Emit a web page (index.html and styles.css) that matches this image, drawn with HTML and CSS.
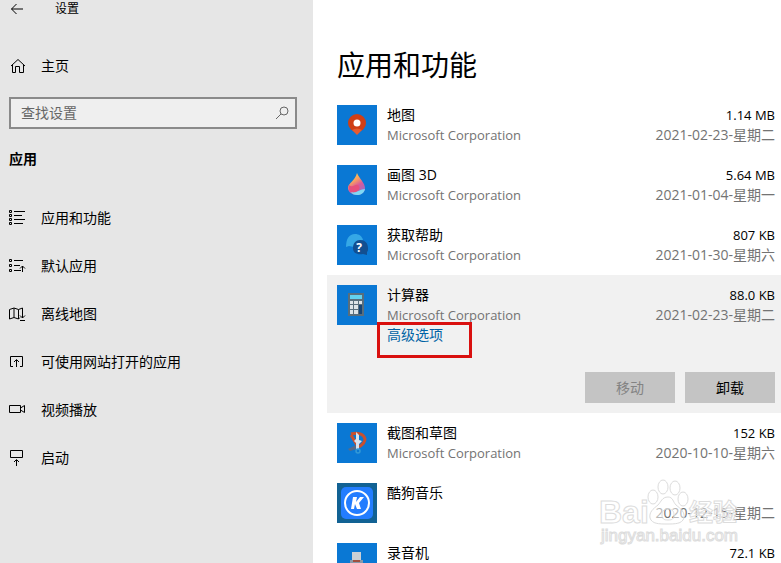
FILE: index.html
```html
<!DOCTYPE html>
<html lang="zh-CN">
<head>
<meta charset="utf-8">
<title>设置</title>
<link rel="stylesheet" href="styles.css">
</head>
<body>
<div class="shell">
  <aside class="sidebar">
    <header class="titlebar">
      <button class="back" type="button" aria-label="返回">
        <svg width="14" height="12" viewBox="0 0 14 12"><path d="M13 6H1.500M6.500 1l-5 5 5 5"/></svg>
      </button>
      <span>设置</span>
    </header>
    <a class="nav-link home" href="#">
      <svg width="18" height="16" viewBox="0 0 18 16"><path d="M2 8l7-6.500L16 8M3.500 6.500V14.500h3V8.500h4v6h4V6.500"/></svg>
      <span>主页</span>
    </a>
    <form class="search">
      <input type="search" placeholder="查找设置" aria-label="查找设置">
      <button type="button" aria-label="搜索">
        <svg width="14" height="14" viewBox="0 0 14 14"><circle cx="9" cy="5" r="4"/><path d="M6 8l-5 5"/></svg>
      </button>
    </form>
    <h2>应用</h2>
    <nav>
      <a class="nav-link" href="#">
        <svg width="18" height="18" viewBox="0 0 18 18"><path d="M.5 1.500h2v2h-2zM.5 5.500h2v2h-2zM.5 9.500h2v2h-2zM.5 13.500h2v2h-2zM5 2.500h11M5 6.500h8M5 10.500h11M5 14.500h9"/></svg>
        <span>应用和功能</span>
      </a>
      <a class="nav-link" href="#">
        <svg width="18" height="18" viewBox="0 0 18 18"><path d="M.5 2.500h2v2h-2zM.5 7.500h2v2h-2zM.5 12.500h2v2h-2zM5 3.500h9M5 8.500h6M5 13.500h7M13.500 15V9M11 11.500L13.500 9l2.500 2.500"/></svg>
        <span>默认应用</span>
      </a>
      <a class="nav-link" href="#">
        <svg width="18" height="16" viewBox="0 0 18 16"><path d="M11 11.500L9.500 13 5 11.500.5 13V3.500L5 2l4.500 1.500L13.500 2v10M5 2v9.500M9.500 3.500V13M11 9.500l2.500 2.500L16 9.500M11 14.500h5"/></svg>
        <span>离线地图</span>
      </a>
      <a class="nav-link" href="#">
        <svg width="18" height="16" viewBox="0 0 18 16"><path d="M4 12.500H1.500v-10h12v10H11M7.500 13V6M5 8l2.500-2.500L10 8"/></svg>
        <span>可使用网站打开的应用</span>
      </a>
      <a class="nav-link" href="#">
        <svg width="18" height="16" viewBox="0 0 18 16"><path d="M.5 3.500h11v7H.5zM11.500 6l4-2.500v7L11.500 8"/></svg>
        <span>视频播放</span>
      </a>
      <a class="nav-link" href="#">
        <svg width="18" height="18" viewBox="0 0 18 18"><path d="M1.500 1.500h12v7h-12zM7.500 17v-6M5 13l2.500-2.500L10 13"/></svg>
        <span>启动</span>
      </a>
    </nav>
  </aside>

  <main class="content">
    <h1>应用和功能</h1>
    <ul class="apps">
      <li class="app">
        <svg class="tile" viewBox="0 0 40 40"><path fill="#a93a20" d="M16 24h8l-4 5z"/><circle cx="20" cy="18" r="9" fill="#cf3f16"/><path fill="#e65b2f" d="M15 25q5-3 10 0l-5 5z"/><circle cx="20" cy="18" r="3.500" fill="#fff"/></svg>
        <div class="info"><strong>地图</strong><span class="latin">Microsoft Corporation</span></div>
        <div class="meta"><span class="size latin">1.14 MB</span><span>2021-02-23-星期二</span></div>
      </li>
      <li class="app">
        <svg class="tile" viewBox="0 0 40 40">
          <defs><linearGradient id="drop" x1=".2" y1="0" x2=".7" y2="1"><stop offset="0" stop-color="#ffd34e"/><stop offset=".35" stop-color="#f9a060"/><stop offset=".6" stop-color="#d95a9b"/><stop offset="1" stop-color="#8c70d0"/></linearGradient></defs>
          <path fill="url(#drop)" d="M20 8c2 5 8 10 8 15 0 4-3 7-8 7s-9-3-9-7c0-5 7-7 9-15z"/><path fill="#e7507c" d="M12 20c4 4 7-3 10 1 2 3-2 6-6 7-3-1-5-4-4-8z"/><path fill="#7fd9f4" d="M14 27c5 2 9-3 14-3-1 4-4 6-8 6-3 0-5-1-6-3z"/>
        </svg>
        <div class="info"><strong>画图 3D</strong><span class="latin">Microsoft Corporation</span></div>
        <div class="meta"><span class="size latin">5.64 MB</span><span>2021-01-04-星期一</span></div>
      </li>
      <li class="app">
        <svg class="tile" viewBox="0 0 40 40"><path fill="#35a8e6" d="M9 22c0-8 3-13 9-13 4 0 7 2 8 6-5 0-9 3-9 7l-5-1z"/><path fill="#124f91" d="M23 15c5 0 8 3 8 8 0 2 0 3-1 4v3l-4-1c-6 1-10-1-10-6s3-8 7-8z"/><text x="22" y="27" text-anchor="middle" class="mark">?</text></svg>
        <div class="info"><strong>获取帮助</strong><span class="latin">Microsoft Corporation</span></div>
        <div class="meta"><span class="size latin">807 KB</span><span>2021-01-30-星期六</span></div>
      </li>
      <li class="app selected">
        <svg class="tile" viewBox="0 0 40 40"><path fill="#596e7c" d="M11 8h16v23H11z"/><path fill="#62d2ef" d="M13 10h12v4H13z"/><path fill="#dce3e7" d="M13 16h3v3h-3zM17 16h4v3h-4zM22 16h3v3h-3zM13 20h3v4h-3zM17 20h4v4h-4zM13 25h3v4h-3zM17 25h4v4h-4z"/><path fill="#174574" d="M22 20h3v9h-3z"/></svg>
        <div class="info"><strong>计算器</strong><span class="latin">Microsoft Corporation</span><a class="advanced" href="#">高级选项</a></div>
        <div class="meta"><span class="size latin">88.0 KB</span><span>2021-02-23-星期二</span></div>
        <div class="actions"><button type="button" disabled>移动</button><button type="button">卸载</button></div>
      </li>
      <li class="app">
        <svg class="tile" viewBox="0 0 40 40"><path fill="none" stroke="#c8502f" stroke-width="3" d="M14 11c7-2 13 0 14 5 0 4-3 6-6 8M14 12l6 10"/><path fill="#586a87" d="M11 26l8-4 1 4-7 2z"/><path fill="#d9e3ed" d="M19 9l3 3v5l3 1-3 3v5h-3v-6l-2-2 2-2z"/><circle cx="21" cy="28" r="2" fill="none" stroke="#3499d6" stroke-width="1.500"/></svg>
        <div class="info"><strong>截图和草图</strong><span class="latin">Microsoft Corporation</span></div>
        <div class="meta"><span class="size latin">152 KB</span><span>2020-10-10-星期六</span></div>
      </li>
      <li class="app">
        <svg class="tile kugou" viewBox="0 0 40 40"><rect x="4" y="4" width="32" height="32" rx="5" fill="#237dff"/><circle cx="20" cy="20" r="12" fill="none" stroke="#fff" stroke-width="2"/><path fill="#fff" d="M16 14h4l-1 5 4-5h4l-5 6 2 6h-4l-2-5-1 5h-3z"/></svg>
        <div class="info"><strong>酷狗音乐</strong></div>
        <div class="meta"><span class="size">&nbsp;</span><span>2020-12-15-星期二</span></div>
      </li>
      <li class="app">
        <svg class="tile" viewBox="0 0 40 40"><path fill="#cbd0d5" d="M15 9h9v9h-9z"/><path fill="#8999a9" d="M13 17h13v15H13z"/><path fill="#a0503f" d="M16 17h7v2h-7z"/></svg>
        <div class="info"><strong>录音机</strong></div>
        <div class="meta"><span class="size latin">72.1 KB</span></div>
      </li>
    </ul>
  </main>
  <svg class="watermark" width="146" height="72" viewBox="0 0 146 72" aria-hidden="true">
    <g><ellipse cx="54" cy="20" rx="5" ry="7"/><ellipse cx="64" cy="10" rx="5" ry="7"/><ellipse cx="76" cy="11" rx="5" ry="7"/><ellipse cx="84" cy="22" rx="5" ry="7"/><path d="M69 20c-6 0-7 5-10 8-5 4-9 7-8 13 2 6 9 6 17 6s15 0 17-6c1-6-3-9-8-13-3-3-3-8-8-8zM63 38c0-4 2-6 6-6s6 2 6 6-2 5-6 5-6-1-6-5z"/></g>
    <text x="0" y="46" class="brand">Bai</text>
    <text x="90" y="44" class="brand-cn">经验</text>
    <text x="2" y="64" class="domain">jingyan.baidu.com</text>
  </svg>
</div>
</body>
</html>
```
FILE: styles.css
```css
* { box-sizing: border-box; }

body {
  margin: 0;
  font: 14px/20px "Open Sans", "Noto Sans CJK SC", sans-serif;
  color: #000;
  background: #fff;
}

button, input { font: inherit; color: inherit; }
a { color: inherit; text-decoration: none; }
h1, h2, ul { margin: 0; padding: 0; }

.shell {
  position: relative;
  display: grid;
  grid-template-columns: 313px 1fr;
  height: 100vh;
  overflow: hidden;
}

.sidebar { background: #e6e6e6; }

.sidebar svg {
  flex: none;
  fill: none;
  stroke: #000;
  stroke-width: 1;
}

.titlebar {
  display: flex;
  align-items: center;
  gap: 31px;
  height: 18px;
  padding-left: 10px;
  font-size: 12px;
}

.back {
  display: flex;
  padding: 0;
  border: 0;
  background: none;
}

.nav-link {
  display: flex;
  align-items: center;
  gap: 14px;
  height: 48px;
  padding-left: 9px;
}

.home { margin-top: 24px; }

.search {
  display: flex;
  align-items: center;
  height: 32px;
  margin: 7px 16px 0 9px;
  padding: 0 6px 0 10px;
  border: 2px solid #8a8a8a;
  background: #efefef;
}

.search input {
  flex: 1;
  min-width: 0;
  padding: 0;
  border: 0;
  outline: 0;
  background: none;
}

.search input::placeholder { color: #666; opacity: 1; }

.search button {
  display: flex;
  padding: 0;
  border: 0;
  background: none;
}

.sidebar .search svg { stroke: #666; }

h2 {
  margin: 20px 9px 25px;
  font-size: 14px;
  line-height: 20px;
}

.content { padding: 45px 0 0 14px; min-width: 0; }

h1 {
  margin-bottom: 10px;
  padding-left: 10px;
  font-size: 28px;
  font-weight: 400;
  line-height: 40px;
}

.apps { list-style: none; }

.app {
  display: grid;
  grid-template-columns: 40px 1fr auto;
  column-gap: 10px;
  padding: 10px 6px 10px 10px;
}

.selected { background: #f1f1f1; }

.tile {
  width: 40px;
  height: 40px;
  background: #0a78d4;
}

.kugou { background: #126294; }
.mark { font: bold 12px "Open Sans", sans-serif; fill: #fff; }

.info, .meta {
  display: flex;
  flex-direction: column;
  align-items: flex-start;
  color: #737373;
}

.info strong { font-weight: 400; color: #000; }
.meta { align-items: flex-end; }
.size { color: #000; }
.latin { font-size: 13px; }

.advanced { position: relative; color: #0063a5; }

.advanced::after {
  content: "";
  position: absolute;
  box-sizing: border-box;
  top: -3px;
  left: -10px;
  width: 95px;
  height: 36px;
  border: 3px solid #d9100f;
}

.actions {
  grid-column: 1 / -1;
  display: flex;
  justify-content: flex-end;
  gap: 10px;
  margin-top: 27px;
}

.actions button {
  width: 90px;
  height: 31px;
  padding: 0;
  border: 0;
  background: #c4c4c4;
}

.actions button:disabled { color: #838383; }

.watermark {
  position: absolute;
  right: 36px;
  bottom: 14px;
  overflow: visible;
  fill: #fff;
  fill-opacity: .5;
  stroke: #dcdcdc;
  stroke-width: 1;
}

.brand { font: bold 32px "Liberation Sans", sans-serif; }
.brand-cn { font: bold 24px "Noto Sans CJK SC", sans-serif; }
.domain { font: 17px "Liberation Sans", sans-serif; }
```
